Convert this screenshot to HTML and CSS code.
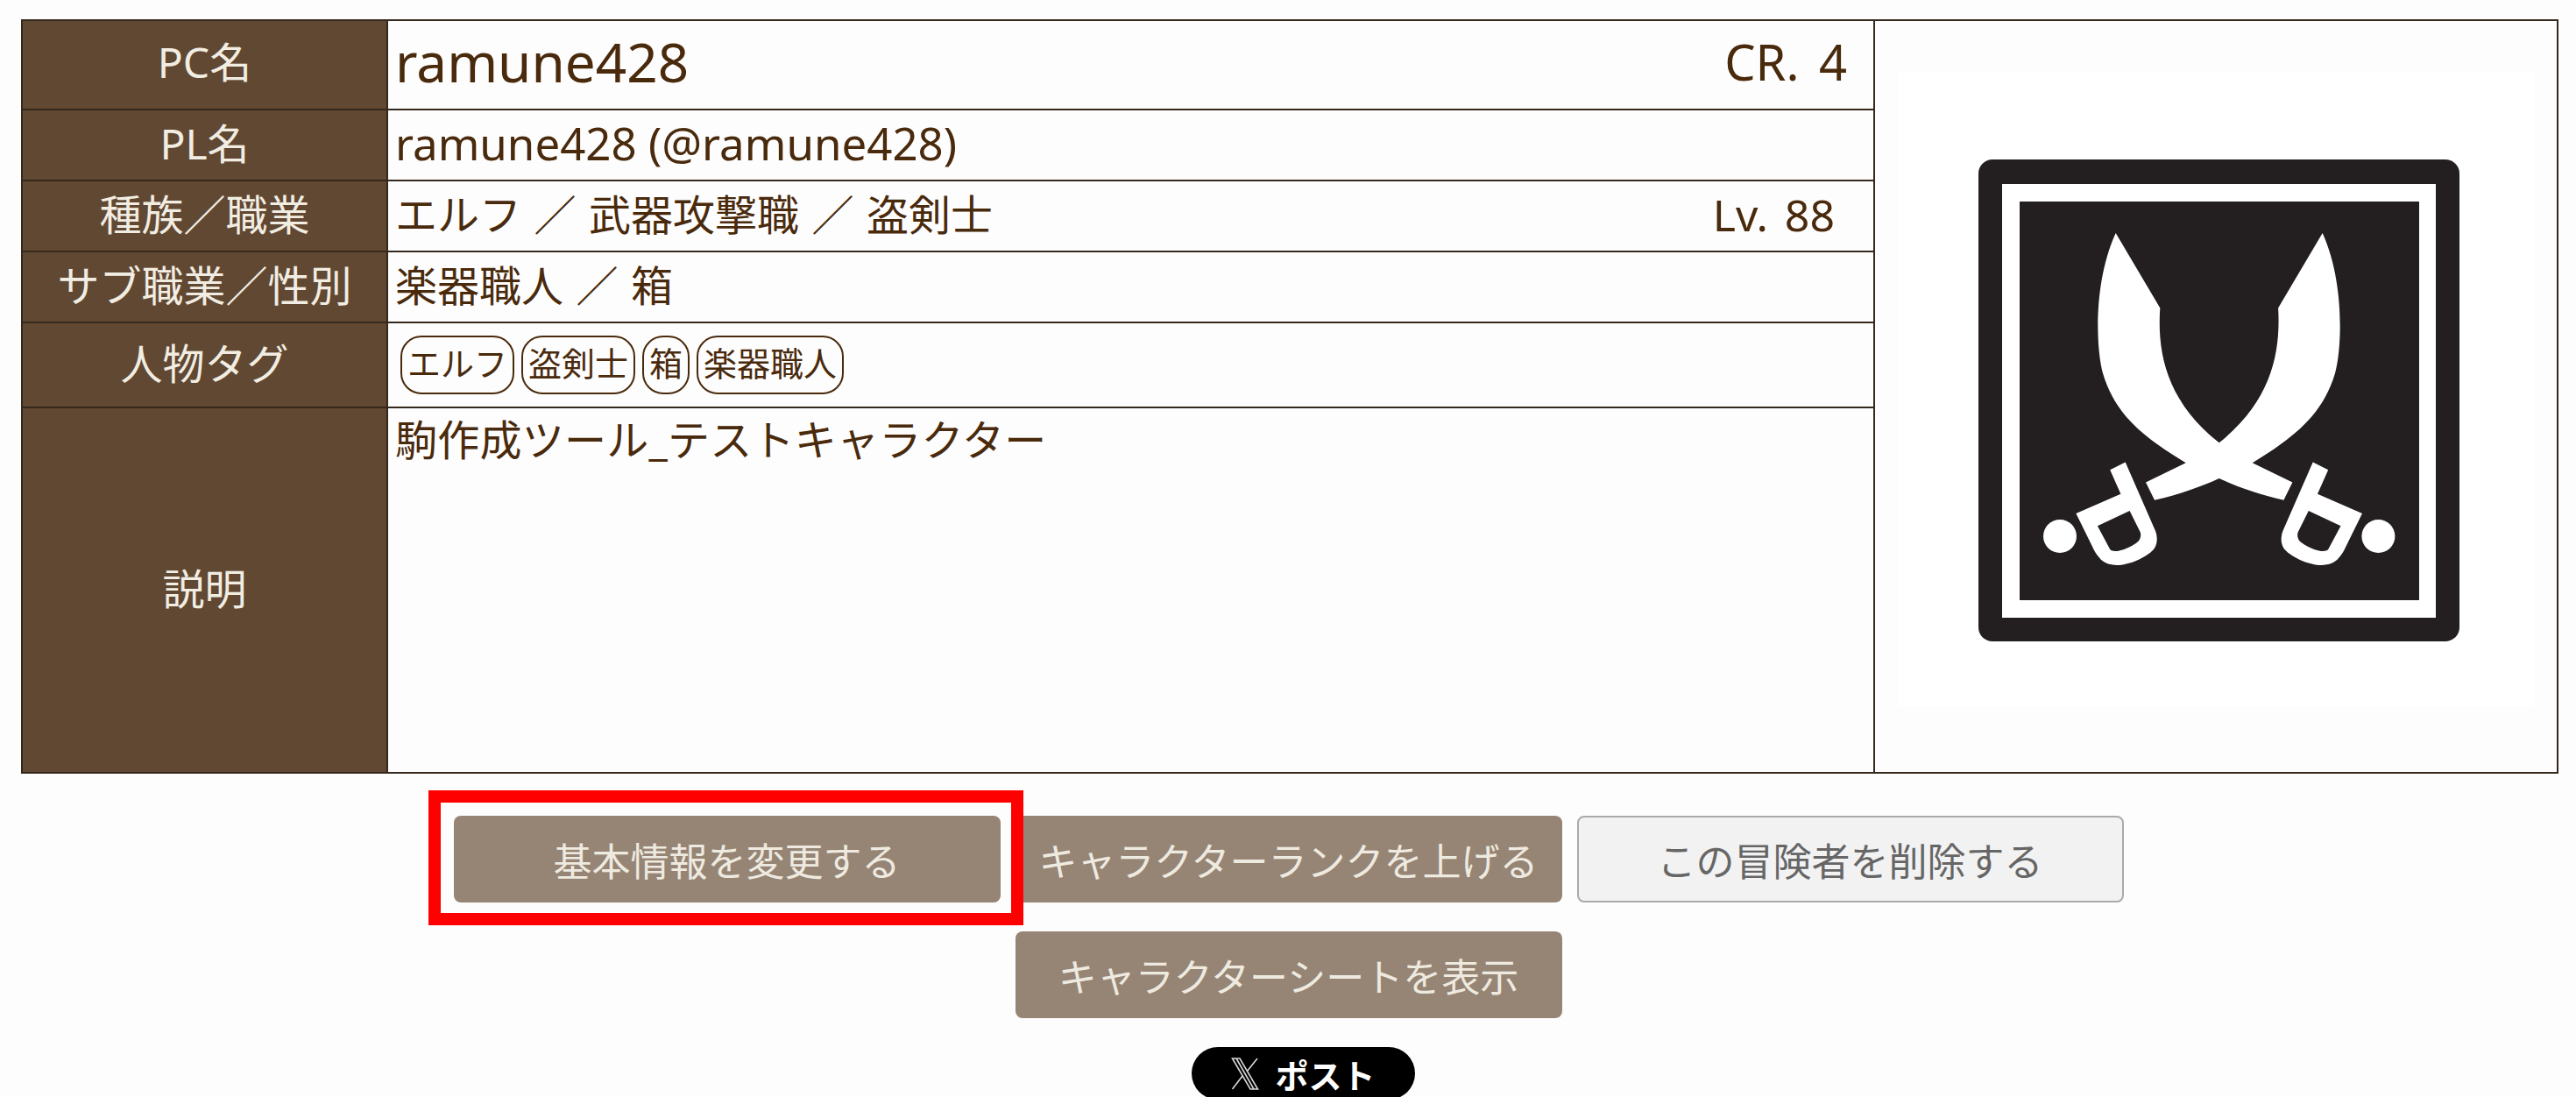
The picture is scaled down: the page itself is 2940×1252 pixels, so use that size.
FILE: index.html
```html
<!DOCTYPE html>
<html lang="ja">
<head>
  <meta charset="UTF-8" />
  <meta name="viewport" content="width=device-width, initial-scale=1.0"/>
  <title>ramune428</title>
  <link rel="stylesheet" href="styles.css">
</head>
<body>

  <table class="profile">
    <tr class="row-name">
      <th>PC名</th>
      <td>
        <div class="split">
          <span class="pc-name">ramune428</span>
          <span class="rank">CR. 4</span>
        </div>
      </td>
      <td class="portrait" rowspan="6">
        <svg class="emblem" viewBox="0 0 725 724">
          <rect x="91" y="100" width="549" height="550" rx="16" fill="#231f20"/>
          <rect x="118" y="128" width="495" height="495" fill="#fff"/>
          <rect x="138" y="148" width="456" height="455" fill="#231f20"/>
          <path fill="#fff" d="M247.7 184 L298.3 269.4 C295 320 305 375 365.7 423.3 C426 375 436 320 433.1 269.4 L483.7 184 C509 240 506 315 498 344 C483 395 446 420 403.7 446.2 L449.4 468.4 L439.4 488.7 C410 482 385 473 365.7 463.9 C346 473 321 482 292 488.7 L282 468.4 L327.7 446.2 C285 420 248 395 233 344 C225 315 222 240 247.7 184 Z"/>
          <g id="hilt">
            <path fill="#fff" fill-rule="evenodd" d="M241.2 454.3 L258.7 445.5 L293 524 C296 532 295 540 291 545 C282 555 262 563 249.3 563 C240 563 233 560 229 554.6 C225 550 223 546 221.6 543 L202.4 504 L253.4 481.8 Z M226.9 518.2 L263.6 501 L275.9 525.8 C277 531 275 535 271.8 537.3 C264 543 256 546 249.3 546.9 C245 547 243 547 241.2 545 Z"/>
            <circle cx="184" cy="530" r="19" fill="#fff"/>
          </g>
          <use href="#hilt" transform="matrix(-1 0 0 1 731.4 0)"/>
        </svg>
      </td>
    </tr>
    <tr>
      <th>PL名</th>
      <td class="latin">ramune428 (@ramune428)</td>
    </tr>
    <tr>
      <th>種族／職業</th>
      <td>
        <div class="split">
          <span class="spaced">エルフ ／ 武器攻撃職 ／ 盗剣士</span>
          <span class="level">Lv. 88</span>
        </div>
      </td>
    </tr>
    <tr>
      <th>サブ職業／性別</th>
      <td class="spaced">楽器職人 ／ 箱</td>
    </tr>
    <tr class="row-tags">
      <th>人物タグ</th>
      <td>
        <div class="tags">
          <span class="tag">エルフ</span>
          <span class="tag">盗剣士</span>
          <span class="tag">箱</span>
          <span class="tag">楽器職人</span>
        </div>
      </td>
    </tr>
    <tr class="row-desc">
      <th>説明</th>
      <td>駒作成ツール_テストキャラクター</td>
    </tr>
  </table>

  <div class="actions">
    <div class="action-row">
      <div class="highlighted">
        <button class="btn">基本情報を変更する</button>
        <span class="highlight"></span>
      </div>
      <button class="btn">キャラクターランクを上げる</button>
      <button class="btn btn-light">この冒険者を削除する</button>
    </div>
    <div class="action-row">
      <button class="btn">キャラクターシートを表示</button>
    </div>
    <a class="post" href="#">
      <svg class="x-logo" viewBox="0 0 32 37">
        <path fill="none" stroke="#d8d8d8" stroke-width="1.6" d="M1.5 1 H10 L30.5 36 H22 Z M6 1 L26 36 M30 1 L18 16 M13 21 L1.5 36"/>
      </svg>
      <span>ポスト</span>
    </a>
  </div>

</body>
</html>
```

FILE: styles.css
```css
* {
  box-sizing: border-box;
}

html,
body {
  height: 100%;
  overflow: hidden;
}

body {
  margin: 0;
  padding: 22px 20px 0;
  font-family: "Noto Sans", "Noto Sans CJK JP", sans-serif;
  font-size: 48px;
  color: #4a2a0c;
  background-color: #fdfdfd;
}

.profile {
  width: 2896px;
  margin-left: 4px;
  table-layout: fixed;
  border-collapse: collapse;
}

.profile th,
.profile td {
  border: 2px solid #35281c;
  padding: 0 8px 4px;
  height: 81px;
  line-height: 1.2;
}

.profile th {
  width: 417px;
  padding: 0 0 4px;
  background-color: #614832;
  color: #f1ede2;
  font-weight: 400;
  text-align: center;
}

.profile td.portrait {
  width: 780px;
  padding: 0 0 18px;
  background-color: #fdfdfd;
}

.emblem {
  display: block;
  width: 725px;
  height: 724px;
  margin: 0 auto;
  background-color: #fff;
}

.row-name th,
.row-name td {
  height: 102px;
  padding-bottom: 7px;
}

.row-tags th,
.row-tags td {
  height: 97px;
}

.row-tags td {
  padding-bottom: 0;
}

.row-desc th,
.row-desc td {
  height: 417px;
}

.row-desc td {
  vertical-align: top;
  padding-top: 7px;
  letter-spacing: 0.25px;
}

.split {
  display: flex;
  justify-content: space-between;
  align-items: center;
}

.pc-name {
  font-size: 62px;
}

.rank {
  font-size: 56px;
  word-spacing: 8px;
  padding-right: 22px;
}

.latin {
  font-size: 51px;
}

.spaced {
  word-spacing: 2px;
}

.level {
  font-size: 50px;
  word-spacing: 6px;
  padding-right: 36px;
}

.tags {
  display: flex;
  gap: 8px;
  padding-left: 6px;
}

.tag {
  border: 2px solid #4a2a0c;
  border-radius: 24px;
  padding: 0 6px;
  height: 67px;
  line-height: 59px;
  font-size: 38px;
}

.actions {
  display: flex;
  flex-direction: column;
  align-items: center;
  gap: 33px;
  margin-top: 48px;
  padding-left: 1px;
}

.action-row {
  display: flex;
  justify-content: center;
  gap: 17px;
}

.highlighted {
  position: relative;
}

.highlight {
  position: absolute;
  inset: -29px -26px -26px -29px;
  border: 14px solid #ff0000;
}

.btn {
  display: block;
  width: 624px;
  height: 99px;
  border: none;
  border-radius: 8px;
  background-color: #968575;
  color: #eeeae0;
  font-family: inherit;
  font-size: 44px;
}

.btn-light {
  background-color: #f2f2f2;
  border: 2px solid #aaaaaa;
  color: #666666;
}

.post {
  display: flex;
  align-items: center;
  justify-content: center;
  gap: 18px;
  width: 255px;
  height: 60px;
  margin-left: 34px;
  border-radius: 30px;
  background-color: #000;
  color: #fff;
  font-size: 38px;
  font-weight: 700;
  text-decoration: none;
}

.x-logo {
  width: 32px;
  height: 37px;
}
```
